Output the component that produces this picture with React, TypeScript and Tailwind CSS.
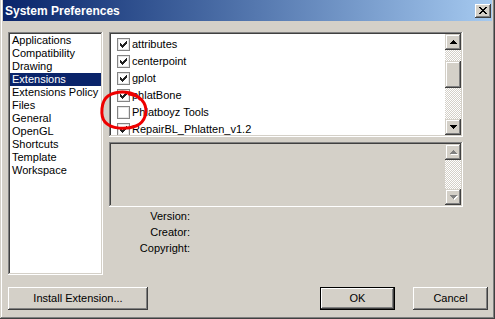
const raised =
  "shadow-[inset_-1px_-1px_#404040,inset_1px_1px_#d4d0c8,inset_-2px_-2px_#808080,inset_2px_2px_#ffffff]";
const button =
  "shadow-[inset_-1px_-1px_#404040,inset_1px_1px_#ffffff,inset_-2px_-2px_#808080,inset_2px_2px_#d4d0c8]";
const sunken =
  "shadow-[inset_-1px_-1px_#ffffff,inset_1px_1px_#808080,inset_-2px_-2px_#d4d0c8,inset_2px_2px_#404040]";
const dither =
  "bg-[repeating-conic-gradient(#ffffff_0_25%,#d4d0c8_0_50%)] bg-[length:2px_2px]";

const categories = [
  "Applications",
  "Compatibility",
  "Drawing",
  "Extensions",
  "Extensions Policy",
  "Files",
  "General",
  "OpenGL",
  "Shortcuts",
  "Template",
  "Workspace",
];

const extensions = [
  { name: "attributes", on: true },
  { name: "centerpoint", on: true },
  { name: "gplot", on: true },
  { name: "phlatBone", on: true },
  { name: "Phlatboyz Tools", on: false },
  { name: "RepairBL_Phlatten_v1.2", on: true },
];

function Arrow({ up, disabled }: { up?: boolean; disabled?: boolean }) {
  const d = up ? "M4 0 L8 4 L0 4 Z" : "M0 0 L8 0 L4 4 Z";
  return (
    <div className={`flex h-[16px] w-[16px] items-center justify-center bg-[#d4d0c8] ${raised}`}>
      <svg width="9" height="5" viewBox="0 0 9 5" shapeRendering="crispEdges">
        {disabled && <path d={d} fill="#ffffff" transform="translate(1 1)" />}
        <path d={d} fill={disabled ? "#808080" : "#000000"} />
      </svg>
    </div>
  );
}

function Checkbox({ on }: { on: boolean }) {
  return (
    <span className="flex h-[13px] w-[13px] shrink-0 items-center justify-center bg-white shadow-[inset_0_0_0_1px_#848484,inset_0_0_0_2px_#e6e6e6]">
      {on && (
        <svg width="7" height="7" viewBox="0 0 7 7" shapeRendering="crispEdges">
          <path d="M0 2 L2 4 L6 0 L7 0 L7 3 L2 7 L0 5 Z" fill="#222222" />
        </svg>
      )}
    </span>
  );
}

export default function App() {
  return (
    <div className="relative flex h-[319px] w-[495px] flex-col bg-[#d4d0c8] px-[3px] pb-[3px] font-['Liberation_Sans',Arial,sans-serif] text-[11px] text-black shadow-[inset_-1px_-1px_#404040,inset_1px_0_#d4d0c8,inset_-2px_-2px_#808080,inset_2px_0_#ffffff]">
      {/* title bar */}
      <div className="flex h-[21px] items-center justify-between bg-linear-to-r from-[#0a246a] to-[#a6caf0] pl-[2px] pr-[1px]">
        <span className="text-[12px] font-bold text-white">System Preferences</span>
        <div className={`flex h-[14px] w-[16px] items-center justify-center bg-[#d4d0c8] ${button}`}>
          <svg width="8" height="7" viewBox="0 0 8 7" shapeRendering="crispEdges">
            <path d="M0 0h2l2 2.5 2-2.5h2L5 3.5 8 7H6L4 4.5 2 7H0l3-3.5z" fill="#000000" />
          </svg>
        </div>
      </div>

      <div className="flex flex-1 flex-col pb-[6px] pl-[5px] pr-[4px] pt-[11px]">
        <div className="flex h-[243px] gap-[6px]">
          {/* categories */}
          <div className={`w-[95px] bg-white p-[2px] ${sunken}`}>
            {categories.map((c) => (
              <div
                key={c}
                className={`h-[13px] px-[2px] leading-[13px] whitespace-nowrap ${
                  c === "Extensions" ? "bg-[#0a246a] text-white" : ""
                }`}
              >
                {c}
              </div>
            ))}
          </div>

          <div className="flex w-[354px] flex-col">
            {/* extension list */}
            <div className={`flex h-[105px] bg-white p-[2px] ${sunken}`}>
              <div className="flex-1 overflow-hidden pt-[2px]">
                {extensions.map((e) => (
                  <div key={e.name} className="flex h-[17px] items-center gap-[2px] pl-[6px] whitespace-nowrap">
                    <Checkbox on={e.on} />
                    <span>{e.name}</span>
                  </div>
                ))}
              </div>
              <div className="flex w-[16px] flex-col">
                <Arrow up />
                <div className={`flex-1 ${dither}`}>
                  <div className="h-[11px]" />
                  <div className={`h-[27px] bg-[#d4d0c8] ${raised}`} />
                </div>
                <Arrow />
              </div>
            </div>

            {/* description */}
            <div className={`mt-[5px] flex h-[65px] justify-end bg-[#d4d0c8] p-[2px] ${sunken}`}>
              <div className="flex w-[16px] flex-col">
                <Arrow up disabled />
                <div className={`flex-1 ${dither}`} />
                <Arrow disabled />
              </div>
            </div>

            <div className="mt-[1px] w-[81px] text-right">
              <div className="h-[16px] leading-[16px]">Version:</div>
              <div className="h-[16px] leading-[16px]">Creator:</div>
              <div className="h-[16px] leading-[16px]">Copyright:</div>
            </div>
          </div>
        </div>

        <div className="mt-[12px] flex h-[23px] items-stretch">
          <button type="button" className={`w-[140px] bg-[#d4d0c8] ${button}`}>
            Install Extension...
          </button>
          <div className="flex-1" />
          <button
            type="button"
            className="w-[75px] bg-[#d4d0c8] shadow-[inset_0_0_0_1px_#000000,inset_-2px_-2px_#404040,inset_2px_2px_#ffffff,inset_-3px_-3px_#808080,inset_3px_3px_#d4d0c8]"
          >
            OK
          </button>
          <button type="button" className={`ml-[18px] w-[75px] bg-[#d4d0c8] ${button}`}>
            Cancel
          </button>
        </div>
      </div>

      {/* hand-drawn red circle */}
      <svg className="pointer-events-none absolute left-0 top-0" width="495" height="319" viewBox="0 0 495 319">
        <path
          d="M140 99 C134 91 118 90 108 96 C101 101 100 116 105 122 C111 129 126 130 136 126 C146 122 148 110 144 103 C141 98 136 95 129 94"
          fill="none"
          stroke="#ee0000"
          strokeWidth="3"
          strokeLinecap="round"
        />
      </svg>
    </div>
  );
}
